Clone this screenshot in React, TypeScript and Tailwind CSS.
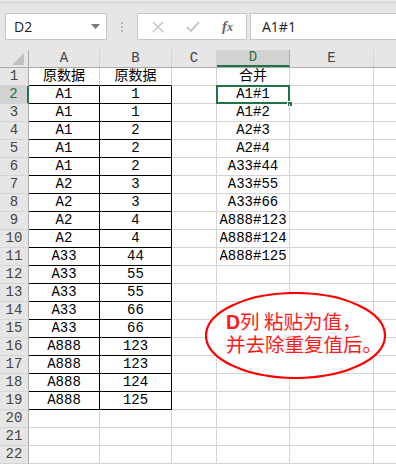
import React from 'react';

const cols = [
  { key: 'A', w: 71 },
  { key: 'B', w: 72 },
  { key: 'C', w: 45 },
  { key: 'D', w: 73 },
  { key: 'E', w: 84 },
  { key: 'F', w: 40 },
];

const colA = ['原数据', 'A1', 'A1', 'A1', 'A1', 'A1', 'A2', 'A2', 'A2', 'A2', 'A33', 'A33', 'A33', 'A33', 'A33', 'A888', 'A888', 'A888', 'A888'];
const colB = ['原数据', '1', '1', '2', '2', '2', '3', '3', '4', '4', '44', '55', '55', '66', '66', '123', '123', '124', '125'];
const colD = ['合并', 'A1#1', 'A1#2', 'A2#3', 'A2#4', 'A33#44', 'A33#55', 'A33#66', 'A888#123', 'A888#124', 'A888#125'];

const cellFont = { fontFamily: "'Liberation Mono', 'Noto Sans CJK SC', monospace" };

const App = () => {
  const rows = Array.from({ length: 22 }, (_, i) => i + 1);

  return (
    <div className="w-[396px] h-[464px] overflow-hidden bg-white relative" style={cellFont}>
      {/* 名称框 + 编辑栏 */}
      <div className="bg-[#e6e6e6] pt-[2px]">
        <div className="h-[48px] border-t border-[#d4d4d4] flex items-start pt-[10px]">
          <div
            className="ml-[5px] w-[102px] h-[27px] bg-white border border-[#c6c6c6] flex items-center pl-[8px] pr-[6px] text-[14px] text-[#222]"
            style={{ fontFamily: "'Open Sans', 'Liberation Sans', sans-serif" }}
          >
            <span className="flex-1">D2</span>
            <svg width="9" height="5" viewBox="0 0 9 5"><path d="M0 0h9L4.5 5z" fill="#777" /></svg>
          </div>
          <div className="w-[30px] h-[27px] flex flex-col items-center justify-center gap-[2px]">
            <span className="w-[2px] h-[2px] bg-[#b5b5b5]" />
            <span className="w-[2px] h-[2px] bg-[#b5b5b5]" />
            <span className="w-[2px] h-[2px] bg-[#b5b5b5]" />
          </div>
          <div className="w-[110px] h-[27px] bg-white border border-[#c6c6c6] flex items-center">
            <svg width="12" height="12" viewBox="0 0 12 12" className="ml-[14px]">
              <path d="M1 1l10 10M11 1L1 11" stroke="#c8c8c8" strokeWidth="1.6" />
            </svg>
            <svg width="14" height="12" viewBox="0 0 14 12" className="ml-[22px]">
              <path d="M1 6l4 4l8-9" stroke="#c8c8c8" strokeWidth="2" fill="none" />
            </svg>
            <span
              className="ml-[22px] text-[15px] italic font-bold text-[#666]"
              style={{ fontFamily: "'Liberation Serif', serif" }}
            >
              f<span className="text-[12px]">x</span>
            </span>
          </div>
          <div
            className="ml-[3px] flex-1 h-[27px] bg-white border border-[#c6c6c6] border-r-0 flex items-center pl-[11px] text-[14px] text-[#222]"
            style={{ fontFamily: "'Open Sans', 'Liberation Sans', sans-serif" }}
          >
            A1#1
          </div>
        </div>
      </div>

      {/* 列标题 */}
      <div className="flex h-[18px] bg-[#e6e6e6] border-b border-[#ababab] text-[14px] text-[#444]">
        <div className="w-[29px] shrink-0 border-r border-[#ababab] relative">
          <svg width="12" height="12" viewBox="0 0 12 12" className="absolute right-[4px] bottom-[2px]">
            <path d="M12 0V12H0z" fill="#c0c0c0" />
          </svg>
        </div>
        {cols.map((c) => (
          <div
            key={c.key}
            className={
              c.key === 'D'
                ? 'shrink-0 border-r border-[#ababab] bg-[#d2d2d2] text-[#217346] flex items-center justify-center border-b-2 border-b-[#217346]'
                : 'shrink-0 border-r border-[#d4d4d4] flex items-center justify-center'
            }
            style={{ width: c.w }}
          >
            {c.key === 'F' ? '' : c.key}
          </div>
        ))}
      </div>

      {/* 单元格 */}
      {rows.map((r) => {
        const a = colA[r - 1];
        const b = colB[r - 1];
        const d = colD[r - 1];
        const inTable = r <= 19;
        return (
          <div key={r} className="flex h-[18px] text-[14px] leading-[17px] text-black">
            <div
              className={
                r === 2
                  ? 'w-[29px] shrink-0 bg-[#d2d2d2] text-[#217346] border-b border-[#d4d4d4] border-r-2 border-r-[#217346] flex items-center justify-center'
                  : 'w-[29px] shrink-0 bg-[#e6e6e6] text-[#444] border-b border-[#d4d4d4] border-r border-r-[#ababab] flex items-center justify-center'
              }
            >
              {r}
            </div>
            <div
              className={
                inTable
                  ? r === 1
                    ? 'w-[71px] shrink-0 border-b border-black border-r border-r-[#d4d4d4] flex items-end justify-center'
                    : 'w-[71px] shrink-0 border-b border-r border-black flex items-end justify-center'
                  : 'w-[71px] shrink-0 border-b border-r border-[#d4d4d4]'
              }
            >
              {a}
            </div>
            <div
              className={
                inTable
                  ? r === 1
                    ? 'w-[72px] shrink-0 border-b border-black border-r border-r-[#d4d4d4] flex items-end justify-center'
                    : 'w-[72px] shrink-0 border-b border-r border-black flex items-end justify-center'
                  : 'w-[72px] shrink-0 border-b border-r border-[#d4d4d4]'
              }
            >
              {b}
            </div>
            <div className="w-[45px] shrink-0 border-b border-r border-[#d4d4d4]" />
            <div className="w-[73px] shrink-0 border-b border-r border-[#d4d4d4] flex items-end justify-center relative">
              {d}
              {r === 2 && (
                <>
                  <span className="absolute left-[-1px] top-[-1px] right-[-1px] bottom-[-1px] border-2 border-[#217346]" />
                  <span className="absolute right-[-4px] bottom-[-4px] w-[6px] h-[6px] bg-[#217346] border border-white" />
                </>
              )}
            </div>
            <div className="w-[84px] shrink-0 border-b border-r border-[#d4d4d4]" />
            <div className="w-[40px] shrink-0 border-b border-[#d4d4d4]" />
          </div>
        );
      })}

      {/* 批注椭圆 */}
      <div className="absolute left-[205px] top-[292px] w-[181px] h-[87px]">
        <svg width="181" height="87" viewBox="0 0 181 87" className="absolute inset-0">
          <ellipse cx="90.5" cy="43.5" rx="89.5" ry="42.5" fill="white" stroke="#ff0000" strokeWidth="2.2" />
        </svg>
        <div
          className="absolute left-[21px] top-[18px] text-[19.5px] leading-[22px] text-[#ff1a1a]"
          style={{ fontFamily: "'Noto Sans CJK SC', 'Liberation Sans', sans-serif" }}
        >
          <div>
            <span className="font-bold" style={{ fontFamily: "'Liberation Sans', sans-serif" }}>D</span>列 粘贴为值，
          </div>
          <div>并去除重复值后。</div>
        </div>
      </div>
    </div>
  );
};

export default App;
